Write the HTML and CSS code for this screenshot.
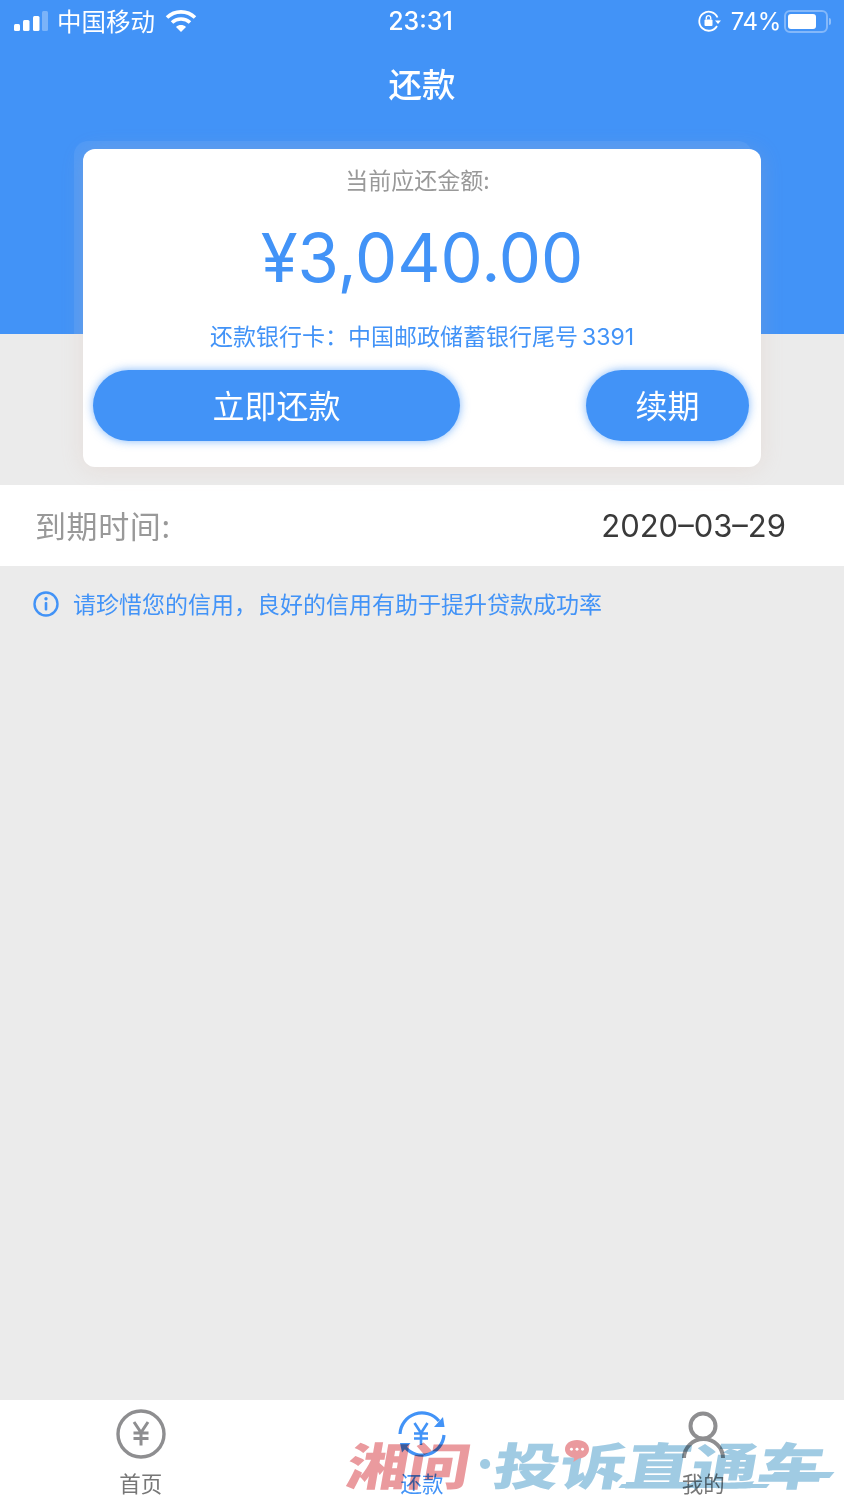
FILE: index.html
```html
<!DOCTYPE html>
<html lang="zh-CN">
<head>
<meta charset="utf-8">
<title>还款</title>
<link rel="stylesheet" href="styles.css">
</head>
<body>
<div class="page">
  <header class="hero">
    <div class="status">
      <div class="status-left">
        <svg class="signal" width="36" height="24" viewBox="0 0 36 24"><rect x="1" y="15" width="6" height="7" rx="1.500" fill="#fff"/><rect x="10" y="11" width="6.500" height="11" rx="1.500" fill="#fff"/><rect x="20" y="7" width="6.500" height="15" rx="1.500" fill="#fff"/><rect x="29" y="2" width="6" height="20" rx="1.500" fill="#fff" fill-opacity=".3"/></svg>
        <span class="carrier">中国移动</span>
        <svg class="wifi" width="32" height="24" viewBox="0 0 32 24"><path d="M2 9.500C9.800 2 22.200 2 30 9.500" fill="none" stroke="#fff" stroke-width="3.600"/><path d="M7 14.500C12 9.800 20 9.800 25 14.500" fill="none" stroke="#fff" stroke-width="3.600"/><path d="M11 19l5 5 5-5c-2.800-2.600-7.200-2.600-10 0z" fill="#fff"/></svg>
      </div>
      <div class="status-time">23:31</div>
      <div class="status-right">
        <svg class="lock" width="24" height="24" viewBox="0 0 24 24"><path d="M20.500 8.500A9.500 9.500 0 1 0 20 17" fill="none" stroke="#fff" stroke-width="1.800"/><path d="M18 11.500h6l-3 3.500z" fill="#fff"/><rect x="7.500" y="10.500" width="8" height="6.500" rx="1" fill="#fff"/><path d="M9.300 10.500V8.800a2.200 2.200 0 0 1 4.400 0v1.700" fill="none" stroke="#fff" stroke-width="1.400"/></svg>
        <span class="percent">74%</span>
        <div class="battery"><div class="battery-fill"></div></div>
        <div class="battery-cap"></div>
      </div>
    </div>
    <h1 class="title">还款</h1>
  </header>

  <section class="card-wrap">
    <div class="card">
      <p class="due-label">当前应还金额:</p>
      <p class="amount">¥3,040.00</p>
      <p class="bank">还款银行卡&#xFF1A;中国邮政储蓄银行尾号&#x2009;3391</p>
      <div class="actions">
        <button class="btn btn-main">立即还款</button>
        <button class="btn btn-side">续期</button>
      </div>
    </div>
  </section>

  <section class="due-row">
    <span class="due-key">到期时间:</span>
    <span class="due-date">2020–03–29</span>
  </section>

  <section class="tip">
    <svg width="26" height="26" viewBox="0 0 26 26"><circle cx="13" cy="13" r="11.500" fill="none" stroke="#4293f7" stroke-width="2.400"/><circle cx="13" cy="7.800" r="1.700" fill="#4293f7"/><rect x="11.700" y="11" width="2.600" height="8.500" rx="1" fill="#4293f7"/></svg>
    <span>请珍惜您的信用&#xFF0C;良好的信用有助于提升贷款成功率</span>
  </section>

  <div class="spacer"></div>

  <nav class="tabs">
    <div class="tab">
      <svg width="52" height="52" viewBox="0 0 52 52"><circle cx="26" cy="26" r="23" fill="none" stroke="#8e8e90" stroke-width="3.400"/><path d="M19 14l7 10.500 7-10.500M18.500 25h15M18.500 30.500h15M26 24v13.500" fill="none" stroke="#8e8e90" stroke-width="3"/></svg>
      <span>首页</span>
    </div>
    <div class="tab tab-on">
      <svg width="52" height="52" viewBox="0 0 52 52"><path d="M4 26A22 22 0 0 1 43 13" fill="none" stroke="#4293f7" stroke-width="3.200"/><path d="M38 19h10.500L47 9z" fill="#4293f7"/><path d="M48 27A22 22 0 0 1 9 39" fill="none" stroke="#4293f7" stroke-width="3.200"/><path d="M4 35h10.500L6 44.500z" fill="#4293f7"/><path d="M18.500 15l6.500 10 6.500-10M18 25.500h14M18 30.500h14M25 25v12" fill="none" stroke="#4293f7" stroke-width="2.600"/></svg>
      <span>还款</span>
    </div>
    <div class="tab">
      <svg width="52" height="52" viewBox="0 0 52 52"><circle cx="26" cy="18" r="12.500" fill="none" stroke="#8e8e90" stroke-width="4"/><path d="M7 50A19.500 19 0 0 1 46 50" fill="none" stroke="#8e8e90" stroke-width="4"/></svg>
      <span>我的</span>
    </div>
  </nav>

  <div class="mark">
    <span class="mark-red">湘问</span><span class="mark-dot">·</span><span class="mark-blue">投诉直通车</span>
    <svg class="mark-bubble" width="26" height="24" viewBox="0 0 28 26"><path d="M14 1c7.500 0 13 4 13 10s-5.500 10-11 10l-6 4 1-4.500C5 19 1 16 1 11 1 5 6.500 1 14 1z" fill="#ea9a9e"/><circle cx="8" cy="11" r="1.600" fill="#fff"/><circle cx="14" cy="11" r="1.600" fill="#fff"/><circle cx="20" cy="11" r="1.600" fill="#fff"/></svg>
    <div class="mark-line"></div>
    <div class="mark-base"></div>
  </div>
</div>
</body>
</html>
```

FILE: styles.css
```css
* { box-sizing: border-box; }
html, body { margin: 0; padding: 0; }
body { font-family: "Inter", "Noto Sans CJK SC", sans-serif; background: #ebebeb; }
p, h1 { margin: 0; }

.page {
  position: relative;
  width: 844px;
  height: 1500px;
  display: flex;
  flex-direction: column;
  overflow: hidden;
  background: #ebebeb;
}

.hero {
  height: 334px;
  flex: none;
  background: #4293f7;
  color: #fff;
}
.status {
  height: 42px;
  display: grid;
  grid-template-columns: 1fr auto 1fr;
  align-items: center;
  padding: 0 13px 0 13px;
}
.status-left { display: flex; align-items: center; }
.carrier { margin-left: 8px; font-size: 24.500px; font-family: "Noto Sans CJK SC", sans-serif; font-weight: 400; line-height: 42px; }
.wifi { margin-left: 10px; margin-top: -2px; }
.status-time { font-size: 25px; font-weight: 500; margin-left: -3px; }
.status-right { display: flex; align-items: center; justify-content: flex-end; }
.percent { margin: 0 3px 0 10px; font-size: 24px; font-weight: 400; letter-spacing: -.3px; }
.battery {
  width: 44px; height: 23px;
  border: 2px solid rgba(255,255,255,.35);
  border-radius: 6px;
  padding: 2px;
}
.battery-fill { width: 28px; height: 15px; background: #fff; border-radius: 3px; }
.battery-cap { width: 2px; height: 7px; margin-left: 1px; background: rgba(255,255,255,.4); border-radius: 0 2px 2px 0; }

.title {
  margin-top: 16px;
  text-align: center;
  font-family: "Noto Sans CJK SC", sans-serif;
  font-size: 33.500px;
  font-weight: 500;
  line-height: 50px;
}

.card-wrap {
  position: relative;
  flex: none;
  margin: -185px 83px 0;
  height: 318px;
}
.card-wrap::before {
  content: "";
  position: absolute;
  left: -9px; right: 9px; top: -8px; height: 193px;
  background: rgba(255,255,255,.07);
  border-radius: 14px 14px 0 0;
}
.card {
  position: relative;
  height: 318px;
  background: #fff;
  border-radius: 12px;
  box-shadow: 0 2px 22px rgba(214,170,150,.2);
  display: flex;
  flex-direction: column;
  align-items: center;
}
.due-label {
  margin-top: 14px;
  height: 34px;
  padding-right: 9px;
  line-height: 32px;
  font-family: "Noto Sans CJK SC", sans-serif;
  font-weight: 400;
  font-size: 23px;
  color: #999;
}
.amount {
  margin-top: 21px;
  height: 80px;
  line-height: 80px;
  font-size: 67px;
  color: #4293f7;
}
.bank {
  margin-top: 22px;
  height: 34px;
  line-height: 34px;
  font-weight: 400;
  font-size: 23px;
  color: #4293f7;
}
.actions {
  align-self: stretch;
  display: flex;
  justify-content: space-between;
  margin-top: 16px;
  padding: 0 12px 0 10px;
}
.btn {
  height: 71px;
  border: 0;
  border-radius: 36px;
  background: #4293f7;
  color: #fff;
  font-family: "Noto Sans CJK SC", sans-serif;
  font-size: 32px;
  font-weight: 400;
  box-shadow: 0 0 10px rgba(66,147,247,.65);
  padding: 0 0 4px;
}
.btn-main { width: 367px; }
.btn-side { width: 163px; }

.due-row {
  flex: none;
  margin-top: 18px;
  height: 81px;
  background: #fff;
  display: flex;
  justify-content: space-between;
  align-items: center;
  padding: 0 58px 0 35px;
}
.due-key { font-family: "Noto Sans CJK SC", sans-serif; font-weight: 400; font-size: 31px; letter-spacing: .6px; color: #999; line-height: 40px; margin-top: -2px; }
.due-date { font-size: 31px; font-weight: 400; color: #3a3a3a; }

.tip {
  flex: none;
  height: 76px;
  display: flex;
  align-items: center;
  padding-left: 33px;
  gap: 14px;
  font-family: "Noto Sans CJK SC", sans-serif;
  font-weight: 400;
  font-size: 23px;
  color: #4293f7;
}
.tip span { margin-top: -2px; }
.spacer { flex: 1; }

.tabs {
  flex: none;
  height: 100px;
  background: #fff;
  display: grid;
  grid-template-columns: repeat(3, 1fr);
}
.tab {
  display: flex;
  flex-direction: column;
  align-items: center;
  padding-top: 8px;
  font-family: "Noto Sans CJK SC", sans-serif;
  font-size: 21.500px;
  font-weight: 400;
  color: #777;
}
.tab span { line-height: 32px; margin-top: 7px; }
.tab-on { color: #4293f7; }

.mark {
  position: absolute;
  left: 348px;
  top: 1434px;
  width: 486px;
  height: 58px;
  display: flex;
  white-space: nowrap;
  font-family: "Noto Sans CJK SC", sans-serif;
  font-weight: 900;
  font-size: 50px;
  line-height: 58px;
  mix-blend-mode: multiply;
}
.mark-red { width: 127px; color: #ea9a9e; transform: skewX(-10deg) scaleX(1.23); transform-origin: left center; }
.mark-dot { width: 20px; text-align: center; font-family: "Inter", sans-serif; color: #a0cbe3; }
.mark-blue { width: 273px; color: #a0cbe3; transform: skewX(-10deg) scaleX(1.32); transform-origin: left center; }
.mark-bubble { position: absolute; left: 216px; top: 5px; }
.mark-line { position: absolute; left: 424px; top: 38px; width: 60px; height: 6px; background: #a0cbe3; transform: skewX(-40deg); }
.mark-base { position: absolute; left: 272px; top: 50px; width: 148px; height: 4px; background: #a0cbe3; transform: skewX(-40deg); }
```
